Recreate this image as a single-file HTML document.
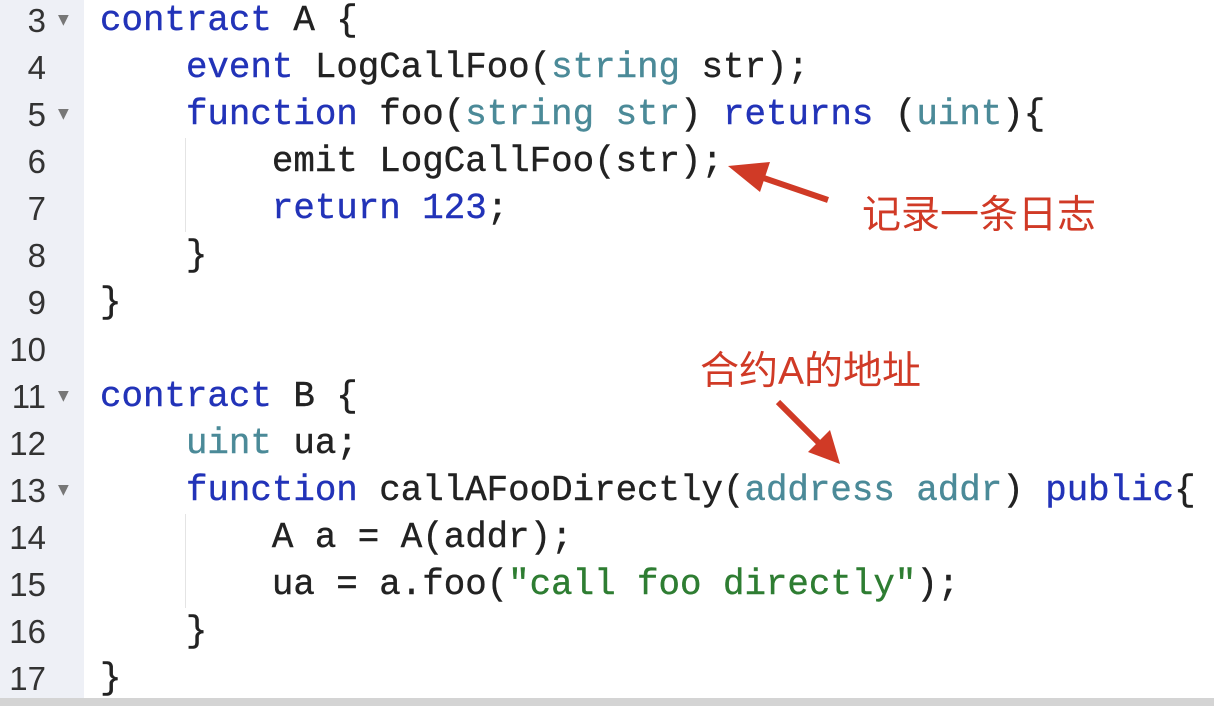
<!DOCTYPE html>
<html><head><meta charset="utf-8"><style>
body{margin:0;width:1214px;height:706px;overflow:hidden;background:#fff;position:relative;font-family:"Liberation Mono",monospace}
.g{position:absolute;left:0;top:0;width:84px;height:698px;background:#eef0f6}
.bot{position:absolute;left:0;top:698px;width:1214px;height:8px;background:#d4d4d4}
.l{position:absolute;left:0;height:47px;line-height:47px;font-size:35.8px;white-space:pre;color:#222;-webkit-text-stroke:0.4px currentColor}
.n{position:absolute;left:0;width:46px;text-align:right;height:47px;line-height:47px;font-size:33px;color:#333;font-family:"Liberation Sans",sans-serif}
.f{position:absolute;left:58px;font-size:14px;color:#777;font-family:"DejaVu Sans",sans-serif}
.c{position:absolute;left:100px}
.k{color:#2233b8}.t{color:#4b8a98}.s{color:#2e7d32}
.ig{position:absolute;width:1px;background:#e4e4e4}
.lab{position:absolute;color:#d03a26;font-size:39px;font-family:"Liberation Sans","Noto Sans CJK SC",sans-serif;white-space:nowrap}
</style></head><body>
<div class="g"></div>
<div class="ig" style="left:185px;top:138px;height:94px"></div>
<div class="ig" style="left:185px;top:514px;height:94px"></div>
<div class="n" style="top:-3px">3</div><div class="f" style="top:12px">▼</div>
<div class="n" style="top:44px">4</div>
<div class="n" style="top:91px">5</div><div class="f" style="top:106px">▼</div>
<div class="n" style="top:138px">6</div>
<div class="n" style="top:185px">7</div>
<div class="n" style="top:232px">8</div>
<div class="n" style="top:279px">9</div>
<div class="n" style="top:326px">10</div>
<div class="n" style="top:373px">11</div><div class="f" style="top:388px">▼</div>
<div class="n" style="top:420px">12</div>
<div class="n" style="top:467px">13</div><div class="f" style="top:482px">▼</div>
<div class="n" style="top:514px">14</div>
<div class="n" style="top:561px">15</div>
<div class="n" style="top:608px">16</div>
<div class="n" style="top:655px">17</div>
<div class="l c" style="top:-3px"><span class="k">contract</span> A {</div>
<div class="l c" style="top:44px">    <span class="k">event</span> LogCallFoo(<span class="t">string</span> str);</div>
<div class="l c" style="top:91px">    <span class="k">function</span> foo(<span class="t">string str</span>) <span class="k">returns</span> (<span class="t">uint</span>){</div>
<div class="l c" style="top:138px">        emit LogCallFoo(str);</div>
<div class="l c" style="top:185px">        <span class="k">return 123</span>;</div>
<div class="l c" style="top:232px">    }</div>
<div class="l c" style="top:279px">}</div>
<div class="l c" style="top:373px"><span class="k">contract</span> B {</div>
<div class="l c" style="top:420px">    <span class="t">uint</span> ua;</div>
<div class="l c" style="top:467px">    <span class="k">function</span> callAFooDirectly(<span class="t">address addr</span>) <span class="k">public</span>{</div>
<div class="l c" style="top:514px">        A a = A(addr);</div>
<div class="l c" style="top:561px">        ua = a.foo(<span class="s">"call foo directly"</span>);</div>
<div class="l c" style="top:608px">    }</div>
<div class="l c" style="top:655px">}</div>
<div class="bot"></div>
<svg style="position:absolute;left:0;top:0" width="1214" height="706">
<g fill="#d03a26" stroke="#d03a26">
<line x1="828" x2="752" y1="200" y2="174" stroke-width="6"/>
<polygon points="728,166 770,162 760,192" stroke="none"/>
<line x1="778" x2="826" y1="402" y2="450" stroke-width="6"/>
<polygon points="840,464 808,452 830,430" stroke="none"/>
</g></svg>
<div class="lab" style="left:862px;top:184px">记录一条日志</div>
<div class="lab" style="left:700px;top:340px">合约A的地址</div>
</body></html>
